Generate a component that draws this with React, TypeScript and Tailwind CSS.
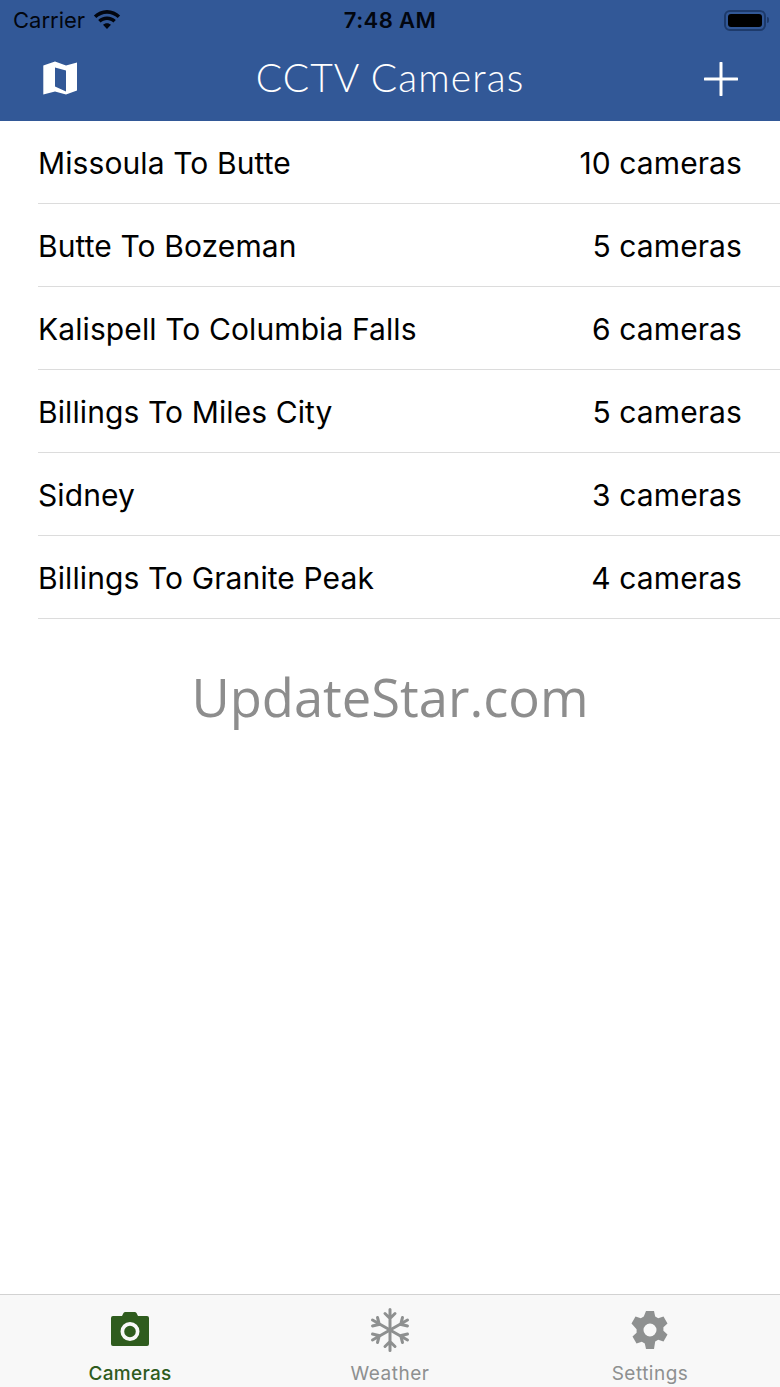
const routes = [
  { name: 'Missoula To Butte', count: 10 },
  { name: 'Butte To Bozeman', count: 5 },
  { name: 'Kalispell To Columbia Falls', count: 6 },
  { name: 'Billings To Miles City', count: 5 },
  { name: 'Sidney', count: 3 },
  { name: 'Billings To Granite Peak', count: 4 },
]

const MapIcon = () => (
  <svg width="36" height="36" viewBox="0 0 36 36" fill="white">
    <path fillRule="evenodd" d="M1.300 4.500 13 .5l11 4 11-3v28l-11 4-11-3-11.700 3v-29Zm11.700 2v19l11 5v-21l-11-3Z" />
  </svg>
)

const CameraIcon = () => (
  <svg width="38" height="34" viewBox="0 0 38 34" fill="#2f5c1e">
    <path fillRule="evenodd" d="M2 4h9l1.500-3Q13 0 14.500 0h9q1.500 0 2 1L27 4h9q2 0 2 2v26q0 2-2 2H2q-2 0-2-2V6q0-2 2-2Zm17 6a9.500 9.500 0 1 0 0 19 9.500 9.500 0 0 0 0-19Zm0 3.700a5.800 5.800 0 1 1 0 11.600 5.800 5.800 0 0 1 0-11.600Z" />
  </svg>
)

const SnowIcon = () => (
  <svg width="40" height="44" viewBox="0 0 40 44" fill="none" stroke="#8e9090" strokeWidth="3" strokeLinecap="round">
    <path d="M20 1.500v41M15 5.500l5 5 5-5M15 38.500l5-5 5 5" />
    <path d="M2.500 12l35 20M2.500 18l6.800-1.700L7.500 9.500M37.500 26l-6.800 1.700 1.800 6.800" />
    <path d="M2.500 32l35-20M2.500 26l6.800 1.700-1.800 6.800M37.500 18l-6.800-1.700 1.800-6.800" />
  </svg>
)

const GearIcon = () => (
  <svg width="38" height="38" viewBox="0 0 38 38" fill="#8e9090">
    <path fillRule="evenodd" d="M15 0h8l1.200 5.500 3 1.700 5.300-1.700 4 6.900-4.100 3.800v3.600l4.100 3.800-4 6.900-5.300-1.700-3 1.700L23 38h-8l-1.200-5.500-3-1.700-5.300 1.700-4-6.900 4.100-3.800v-3.600L.5 12.400l4-6.900 5.300 1.700 3-1.700L15 0Zm4 12.500a6.500 6.500 0 1 0 0 13 6.500 6.500 0 0 0 0-13Z" />
  </svg>
)

export default function App() {
  return (
    <div className="w-[780px] h-[1387px] flex flex-col bg-white font-['Inter',sans-serif] overflow-hidden">
      <header className="h-[121px] shrink-0 bg-[#325897]">
        <div className="h-[40px] flex items-center justify-between relative pl-[13px] pr-[11px] text-[#02060f]">
          <div className="flex items-center gap-[7px]">
            <span className="text-[22px]">Carrier</span>
            <svg width="30" height="21" viewBox="0 0 28 20" fill="#02060f">
              <path d="M14 3.500c4 0 7.500 1.500 10.200 4.100L26.500 5.200C23.200 2 18.800 0 14 0S4.800 2 1.500 5.200l2.300 2.400C6.500 5 10 3.500 14 3.500Z" />
              <path d="M14 9.500c2.400 0 4.500.9 6.100 2.400l2.300-2.400C20.200 7.400 17.300 6.100 14 6.100S7.800 7.400 5.600 9.500l2.300 2.400c1.600-1.500 3.700-2.400 6.100-2.400Z" />
              <path d="M14 12.500c-1.500 0-2.800.6-3.800 1.500L14 18l3.800-4c-1-.9-2.300-1.500-3.800-1.500Z" />
            </svg>
          </div>
          <span className="absolute left-0 right-0 text-center text-[22px] font-semibold tracking-[0.4px]">7:48 AM</span>
          <div className="flex items-center">
            <div className="w-[42px] h-[21px] rounded-[6px] border-2 border-[#1d3a6b] p-[2px]">
              <div className="w-full h-full rounded-[3px] bg-black" />
            </div>
            <div className="w-[2px] h-[6px] ml-[1px] rounded-r-sm bg-[#1d3a6b]" />
          </div>
        </div>
        <div className="h-[81px] flex items-center justify-between pl-[42px] pr-[42px] pb-[4px]">
          <MapIcon />
          <h1 className="font-['Lato',sans-serif] font-light text-[39px] leading-[46px] mb-[3px] mr-[2px] tracking-[1.100px] text-white">CCTV Cameras</h1>
          <svg width="34" height="34" viewBox="0 0 34 34" stroke="white" strokeWidth="3" strokeLinecap="round">
            <path d="M17 1v32M1 17h32" />
          </svg>
        </div>
      </header>

      <main className="flex-1 min-h-0">
        {routes.map((route) => (
          <div key={route.name} className="ml-[38px] h-[83px] pr-[38px] pt-[2px] flex items-center justify-between border-b border-[#dcdcdc] text-[30px] tracking-[0.1px] text-black">
            <span>{route.name}</span>
            <span>{route.count} cameras</span>
          </div>
        ))}
        <p className="mt-[43px] text-center font-['Open_Sans',sans-serif] text-[52.500px] leading-[70px] text-[#8d8d8d]">UpdateStar.com</p>
      </main>

      <nav className="h-[93px] shrink-0 grid grid-cols-3 bg-[#f8f8f8] border-t border-[#d2d2d2]">
        <div className="flex flex-col items-center pt-[17px] text-[#2f5c1e]">
          <div className="h-[34px] flex items-center"><CameraIcon /></div>
          <span className="mt-[15px] text-[19px] leading-[26px] font-medium tracking-[0.3px]">Cameras</span>
        </div>
        <div className="flex flex-col items-center pt-[13px] text-[#8e9090]">
          <div className="h-[44px] flex items-center"><SnowIcon /></div>
          <span className="mt-[9px] text-[19px] leading-[26px] tracking-[0.5px]">Weather</span>
        </div>
        <div className="flex flex-col items-center pt-[16px] text-[#8e9090]">
          <div className="h-[38px] flex items-center"><GearIcon /></div>
          <span className="mt-[12px] text-[19px] leading-[26px] tracking-[0.5px]">Settings</span>
        </div>
      </nav>
    </div>
  )
}
